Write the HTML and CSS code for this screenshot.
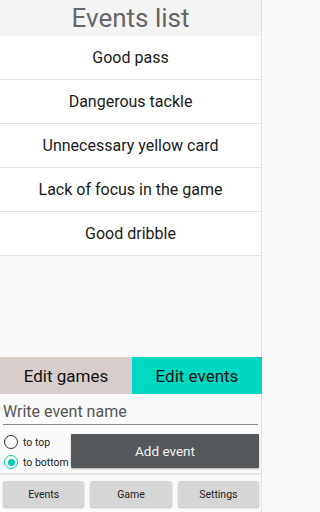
FILE: index.html
```html
<!DOCTYPE html>
<html>
<head>
<meta charset="utf-8">
<link rel="stylesheet" href="styles.css">
</head>
<body>
<div class="app">
  <header class="title">Events list</header>
  <ul class="list">
    <li class="row">Good pass</li>
    <li class="row">Dangerous tackle</li>
    <li class="row">Unnecessary yellow card</li>
    <li class="row">Lack of focus in the game</li>
    <li class="row">Good dribble</li>
  </ul>
  <div class="spacer"></div>
  <div class="tabs">
    <div class="tab tab-games">Edit games</div>
    <div class="tab tab-events">Edit events</div>
  </div>
  <div class="form">
    <div class="input">Write event name</div>
    <div class="controls">
      <div class="radios">
        <div class="radio"><span class="circle"></span><span>to top</span></div>
        <div class="radio"><span class="circle checked"></span><span>to bottom</span></div>
      </div>
      <div class="add">Add event</div>
    </div>
  </div>
  <nav class="nav">
    <div class="navbtn">Events</div>
    <div class="navbtn">Game</div>
    <div class="navbtn">Settings</div>
  </nav>
</div>
</body>
</html>
```
FILE: styles.css
```css
* { box-sizing: border-box; }
html, body { margin: 0; padding: 0; }
body {
  width: 262px;
  height: 512px;
  background: #fafafa;
  font-family: Roboto, "Liberation Sans", sans-serif;
  overflow: hidden;
}
.app {
  height: 512px;
  display: flex;
  flex-direction: column;
  border-right: 1px solid #e2e2e2;
}
.title {
  height: 36px;
  line-height: 37px;
  background: #f4f4f4;
  color: #666;
  font-size: 26px;
  text-align: center;
}
.list {
  list-style: none;
  margin: 0;
  padding: 0;
  background: #fff;
}
.row {
  height: 44px;
  border-bottom: 1px solid #e3e3e3;
  display: flex;
  align-items: center;
  justify-content: center;
  font-size: 16px;
  color: #1a1a1a;
  padding-bottom: 1px;
}
.spacer { flex: 1; }
.tabs {
  display: flex;
  height: 37px;
  margin-right: -1px;
}
.tab {
  display: flex;
  align-items: center;
  justify-content: center;
  font-size: 17px;
  color: #111;
}
.tab-games { width: 132px; background: #d7cdca; }
.tab-events { flex: 1; background: #00d8c4; }
.form { padding: 0 2px 0 3px; }
.input {
  height: 31px;
  padding-top: 8px;
  font-size: 16px;
  color: #555;
  border-bottom: 1px solid #8a8a8a;
  margin-right: 1px;
}
.controls {
  display: flex;
  align-items: flex-start;
  height: 48px;
  padding-top: 9px;
}
.radios {
  width: 68px;
  display: flex;
  flex-direction: column;
  gap: 6px;
  padding-top: 1px;
  padding-left: 1px;
}
.radio {
  display: flex;
  align-items: center;
  gap: 5px;
  font-size: 10.5px;
  color: #222;
}
.circle {
  width: 14px;
  height: 14px;
  border: 1.7px solid #333;
  border-radius: 50%;
  display: flex;
  align-items: center;
  justify-content: center;
}
.circle.checked { border-color: #00cdb8; }
.circle.checked::after {
  content: "";
  width: 7px;
  height: 7px;
  border-radius: 50%;
  background: #00cdb8;
}
.add {
  flex: 1;
  height: 34px;
  background: #54585b;
  color: #f2f2f2;
  font-size: 13.5px;
  display: flex;
  align-items: center;
  justify-content: center;
  border-radius: 1px;
  box-shadow: 0 1px 2px rgba(0,0,0,0.3);
}
.nav {
  border-top: 2px solid #e6e6e6;
  height: 39px;
  display: flex;
  gap: 6px;
  padding: 6px 2px 5px 3px;
}
.navbtn {
  flex: 1;
  background: #d6d6d6;
  font-size: 10.5px;
  color: #222;
  display: flex;
  align-items: center;
  justify-content: center;
  border-radius: 2px;
  box-shadow: 0 1px 2px rgba(0,0,0,0.25);
}
```
